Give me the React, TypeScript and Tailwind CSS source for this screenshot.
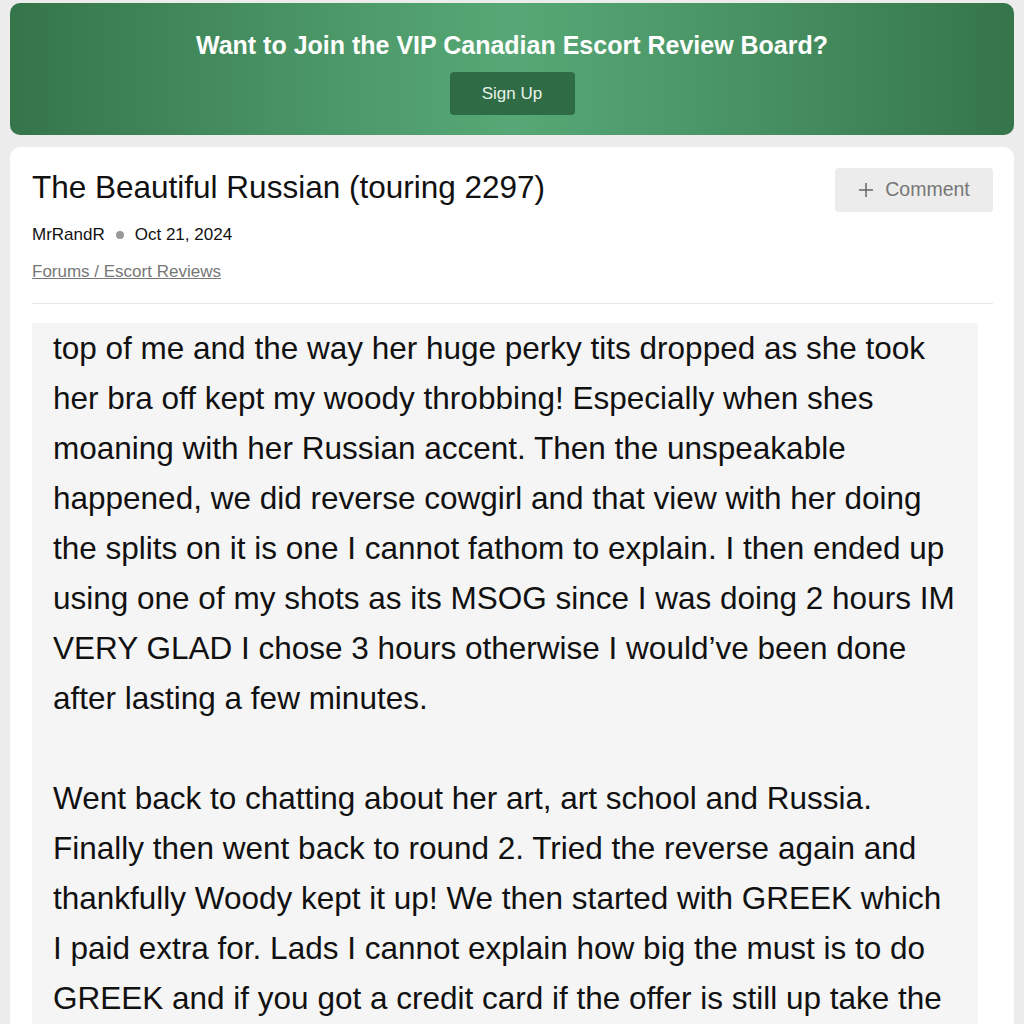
import React from 'react';

// body text kept in the same line breaks as the source post
const paragraphs = [
  [
    'top of me and the way her huge perky tits dropped as she took',
    'her bra off kept my woody throbbing! Especially when shes',
    'moaning with her Russian accent. Then the unspeakable',
    'happened, we did reverse cowgirl and that view with her doing',
    'the splits on it is one I cannot fathom to explain. I then ended up',
    'using one of my shots as its MSOG since I was doing 2 hours IM',
    'VERY GLAD I chose 3 hours otherwise I would’ve been done',
    'after lasting a few minutes.',
  ],
  [
    'Went back to chatting about her art, art school and Russia.',
    'Finally then went back to round 2. Tried the reverse again and',
    'thankfully Woody kept it up! We then started with GREEK which',
    'I paid extra for. Lads I cannot explain how big the must is to do',
    'GREEK and if you got a credit card if the offer is still up take the',
  ],
];

const App = () => {
  return (
    <div className="flex h-[1024px] flex-col overflow-hidden bg-[#ececec] px-[10px] pt-[3px] font-['Liberation_Sans',Arial,sans-serif]">
      {/* VIP banner */}
      <div className="flex h-[132px] shrink-0 flex-col items-center rounded-[10px] bg-[linear-gradient(90deg,#347549_0%,#4a9566_30%,#57a876_50%,#4a9566_70%,#347549_100%)] pt-[27px]">
        <h1 className="text-[25px] font-bold leading-[30px] text-white">
          Want to Join the VIP Canadian Escort Review Board?
        </h1>
        <button className="mt-[12px] h-[43px] w-[125px] rounded-[4px] bg-[#2f6c45] text-[17px] text-[#e8f2ea]">
          Sign Up
        </button>
      </div>

      {/* Thread card */}
      <div className="mt-[12px] flex flex-1 flex-col rounded-t-[10px] bg-white pl-[22px] pr-[21px] pt-[21px]">
        <div className="flex items-start justify-between">
          <div>
            <h2 className="text-[31.5px] leading-[38px] text-[#111]">The Beautiful Russian (touring 2297)</h2>
            <div className="mt-[19px] flex items-center text-[17px] leading-[20px] text-[#111]">
              <span>MrRandR</span>
              <span className="mx-[11px] h-[8px] w-[8px] rounded-full bg-[#999]" />
              <span>Oct 21, 2024</span>
            </div>
            <a className="mt-[17px] block text-[17px] leading-[20px] text-[#777] underline">Forums / Escort Reviews</a>
          </div>
          <button className="flex h-[44px] w-[158px] items-center justify-center gap-[11px] rounded-[4px] bg-[#ececec] text-[19.5px] text-[#777]">
            <svg width="16" height="16" viewBox="0 0 16 16" fill="none" stroke="#666" strokeWidth="1.5">
              <path d="M8 1v14M1 8h14" />
            </svg>
            Comment
          </button>
        </div>
        <div className="mt-[21px] h-px shrink-0 bg-[#e6e6e6]" />
        <div className="mr-[15px] mt-[19px] flex-1 bg-[#f5f5f5] pl-[21px] pr-[10px]">
          {paragraphs.map((lines, i) => (
            <p key={i} className={`whitespace-nowrap text-[31.5px] leading-[50px] text-[#111] ${i > 0 ? 'mt-[50px]' : ''}`}>
              {lines.map((l, j) => (
                <React.Fragment key={j}>
                  {l}
                  {j < lines.length - 1 && <br />}
                </React.Fragment>
              ))}
            </p>
          ))}
        </div>
      </div>
    </div>
  );
};

export default App;
